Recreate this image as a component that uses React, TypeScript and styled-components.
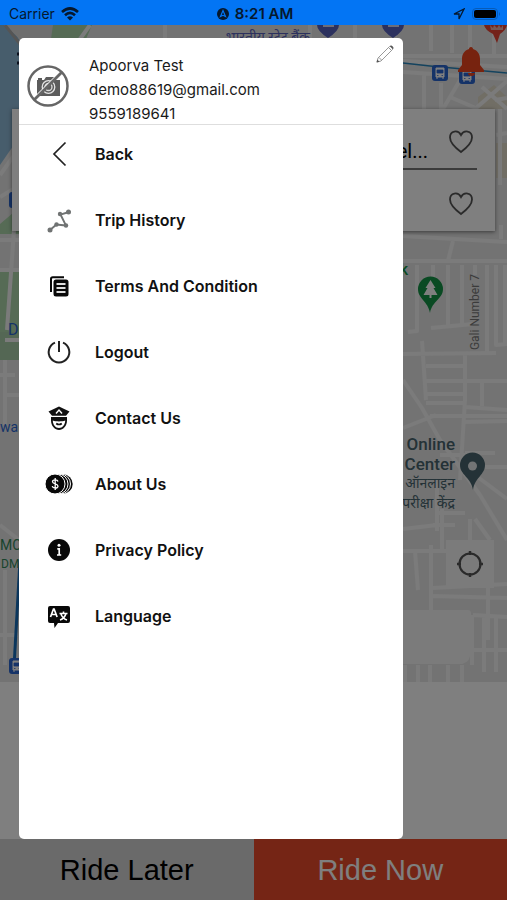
import React from "react";
import styled, { createGlobalStyle, css } from "styled-components";

const Global = createGlobalStyle`
  * { box-sizing: border-box; }
  body { margin: 0; font-family: Inter, "Noto Sans", sans-serif; color: #111; }
  button { font: inherit; color: inherit; border: 0; padding: 0; background: none; cursor: pointer; }
  svg { display: block; }
`;

const Page = styled.div`
  min-height: 100vh;
  display: flex;
  flex-direction: column;
  background: #fff;
`;

const StatusBar = styled.header`
  height: 25px;
  padding: 2px 6px 0 9px;
  display: grid;
  grid-template-columns: 1fr auto 1fr;
  align-items: center;
  background: #0375f4;
  color: #06182e;
  font-size: 14px;
  line-height: 20px;
`;

const StatusGroup = styled.div<{ $end?: boolean; $strong?: boolean }>`
  display: flex;
  align-items: center;
  gap: 6px;
  justify-content: ${(p) => (p.$end ? "flex-end" : "flex-start")};
  font-weight: ${(p) => (p.$strong ? 600 : 400)};
  font-size: ${(p) => (p.$strong ? 15 : 14)}px;
`;

const Stage = styled.div`
  position: relative;
  flex: 1;
  display: flex;
  flex-direction: column;
`;

const MapArea = styled.main`
  position: relative;
  flex: 1;
  overflow: hidden;
  margin-bottom: 157px;
  display: flex;
  flex-direction: column;
  background: #eaeaea;
`;

const MapCanvas = styled.svg`
  position: absolute;
  inset: 0;
  width: 100%;
  height: 100%;
`;

const MapLabel = styled.span<{ $x: number; $y: number; $color: string; $size?: number; $bold?: boolean; $fromRight?: boolean; $vertical?: boolean }>`
  position: absolute;
  top: ${(p) => p.$y}px;
  ${(p) => (p.$fromRight ? css`right: ${p.$x}px;` : css`left: ${p.$x}px;`)}
  color: ${(p) => p.$color};
  font-family: Roboto, "Noto Sans", sans-serif;
  font-size: ${(p) => p.$size ?? 16}px;
  line-height: 20px;
  font-weight: ${(p) => (p.$bold ? 500 : 400)};
  white-space: nowrap;
  text-align: right;
  ${(p) => p.$vertical && css`writing-mode: vertical-rl; rotate: 180deg;`}
`;

const MapTools = styled.div`
  position: relative;
  height: 84px;
  padding: 21px 22px 0 17px;
  display: flex;
  justify-content: space-between;
  align-items: flex-start;
`;

const PlaceCard = styled.section`
  position: relative;
  margin: 0 12px;
  height: 122px;
  padding: 0 18px;
  background: #fff;
  box-shadow: 0 1px 4px rgba(0, 0, 0, 0.5);
`;

const PlaceRow = styled.div<{ $line?: boolean }>`
  height: 61px;
  padding: 7px 3px 0 0;
  display: flex;
  align-items: center;
  justify-content: flex-end;
  gap: 20px;
  border-bottom: ${(p) => (p.$line ? "2px solid #777" : "0")};
  font-family: Roboto, sans-serif;
  font-size: 20px;
  color: #000;
`;

const PlaceText = styled.span`
  padding-top: 18px;
`;

const LocateButton = styled.button`
  position: absolute;
  right: 13px;
  bottom: 94px;
  width: 48px;
  height: 48px;
  display: grid;
  place-items: center;
  background: #f7f7f7;
`;

const Footer = styled.footer`
  display: grid;
  grid-template-columns: 1fr 1fr;
  height: 61px;
`;

const RideButton = styled.button<{ $primary?: boolean }>`
  && {
    padding-top: 2px;
    font-family: "Liberation Sans", Arial, sans-serif;
    font-size: 29px;
    background: ${(p) => (p.$primary ? "#ea4b2a" : "#d4d4d4")};
    color: ${(p) => (p.$primary ? "#fff" : "#000")};
  }
`;

const Scrim = styled.div`
  position: absolute;
  inset: 0;
  display: flex;
  padding: 13px 0 61px 19px;
  background: rgba(0, 0, 0, 0.5);
`;

const Drawer = styled.aside`
  width: 79%;
  max-width: 384px;
  background: #fff;
  border-radius: 5px;
`;

const Profile = styled.div`
  height: 87px;
  padding: 6px 8px 0;
  display: grid;
  grid-template-columns: 42px 1fr 20px;
  column-gap: 20px;
  align-items: start;
  border-bottom: 1px solid #dedede;
`;

const Avatar = styled.div`
  padding-top: 21px;
`;

const ProfileText = styled.div`
  padding-top: 10px;
  font-size: 15px;
  line-height: 24px;
  color: #1a1a1a;
`;

const ProfileLine = styled.div``;

const Menu = styled.nav`
  padding-top: 11px;
`;

const MenuItem = styled.button`
  width: 100%;
  height: 36px;
  margin-bottom: 30px;
  padding-left: 25px;
  display: grid;
  grid-template-columns: 30px 1fr;
  column-gap: 21px;
  align-items: center;
  text-align: left;
`;

const MenuLabel = styled.span`
  font-size: 16px;
  line-height: 24px;
  font-weight: 600;
`;

const Icon = ({ children, w = 30, h = w }: { children: React.ReactNode; w?: number; h?: number }) => (
  <svg width={w} height={h} viewBox={`0 0 ${w} ${h}`} fill="none" aria-hidden="true">{children}</svg>
);

const BackIcon = () => <Icon><path d="M21.500 3.500 10 15 21.500 26.500" stroke="#222" strokeWidth="1.700" /></Icon>;

const TripIcon = () => (
  <Icon>
    <path d="M6 25 12.500 19.500 22 20.500 16.500 9.500 25 7" stroke="#707373" strokeWidth="1.900" />
    <g fill="#707373"><circle cx="6" cy="25" r="2.500" /><circle cx="12.500" cy="19.500" r="2.200" /><circle cx="22" cy="20.500" r="2.200" /><circle cx="16" cy="9" r="2.200" /><circle cx="24.500" cy="7" r="2.500" /></g>
  </Icon>
);

const TermsIcon = () => (
  <Icon>
    <path d="M7 21V8q0-1.800 1.800-1.800H20" stroke="#080808" strokeWidth="2" />
    <rect x="9.500" y="8.500" width="15" height="17" rx="2.500" fill="#080808" />
    <path d="M12.500 13h9M12.500 17h9M12.500 21h9" stroke="#ddd" strokeWidth="1.900" />
  </Icon>
);

const PowerIcon = () => (
  <Icon><path d="M11 5.600a10.300 10.300 0 1 0 8 0M15 4v11" stroke="#222" strokeWidth="2" /></Icon>
);

const OfficerIcon = () => (
  <Icon>
    <path d="M4.500 8.500 15 3.500l10.500 5-3.500 4.200H8z" fill="#111" />
    <path d="m12 10.500 3-3.500 3 3.500" stroke="#fff" strokeWidth="1.400" />
    <path d="M7 14h16v3.500c0 5.500-4 9.500-8 9.500s-8-4-8-9.500z" fill="#111" />
    <path d="M8.800 17.500c3 1.200 9.400 1.200 12.400 0 0 4-2.700 7.500-6.200 7.500s-6.200-3.500-6.200-7.500z" fill="#fff" />
    <path d="M12.200 20.500q2.800 2 5.600 0" stroke="#111" strokeWidth="1.700" />
  </Icon>
);

const CoinsIcon = () => (
  <Icon>
    <circle cx="19" cy="15" r="9.700" fill="#080808" />
    <circle cx="16.500" cy="15" r="10" fill="#080808" stroke="#fff" />
    <circle cx="14" cy="15" r="10" fill="#080808" stroke="#fff" />
    <circle cx="11" cy="15" r="10" fill="#080808" stroke="#fff" />
    <path d="M14 12.500c-.5-2-5.500-2.300-5.500.3 0 2.700 5.500 1.600 5.500 4.400 0 2.500-5.200 2.400-5.800 0M11.200 9v12" stroke="#fff" strokeWidth="1.300" />
  </Icon>
);

const InfoIcon = () => (
  <Icon>
    <circle cx="15" cy="15" r="11" fill="#080808" />
    <circle cx="15" cy="10.300" r="1.500" fill="#fff" />
    <path d="M13.300 13.800H15.200v6M13 20h4.200" stroke="#fff" strokeWidth="1.700" />
  </Icon>
);

const LanguageIcon = () => (
  <Icon>
    <path d="M6 5h18q2 0 2 2v13q0 2-2 2H14l-3.500 5L10 22H6q-2 0-2-2V7q0-2 2-2z" fill="#080808" />
    <path d="m6.500 16 3-8h.6l3 8M7.500 13.500h5" stroke="#fff" strokeWidth="1.700" />
    <path d="M15.500 12.500h8M19.500 10.500v2M22 12.500c-1 3.500-3 5.500-6 6.500M17 13c1 3 3 5 6 6" stroke="#fff" strokeWidth="1.600" />
  </Icon>
);

const items = [
  { label: "Back", icon: <BackIcon /> },
  { label: "Trip History", icon: <TripIcon /> },
  { label: "Terms And Condition", icon: <TermsIcon /> },
  { label: "Logout", icon: <PowerIcon /> },
  { label: "Contact Us", icon: <OfficerIcon /> },
  { label: "About Us", icon: <CoinsIcon /> },
  { label: "Privacy Policy", icon: <InfoIcon /> },
  { label: "Language", icon: <LanguageIcon /> },
];

const NoPhotoIcon = () => (
  <Icon w={42}>
    <path d="M10 15h1v-2h4v2h2l2-3h8l2 3h4v16H10z" fill="#5c5c5c" />
    <circle cx="21.500" cy="22" r="6.300" stroke="#e4e4e4" strokeWidth="1.300" />
    <circle cx="21.500" cy="22" r="3.500" stroke="#ddd" strokeWidth="1.300" />
    <path d="m9 31 24-24" stroke="#fff" strokeWidth="1.500" />
    <path d="m7 35 28-28" stroke="#666" strokeWidth="2.800" />
    <circle cx="21" cy="21" r="19.500" stroke="#666" strokeWidth="2.500" />
  </Icon>
);

const PencilIcon = () => (
  <Icon w={20}>
    <path d="m2 18 1-4L14.500 2.500q1.500-1.500 3 0t0 3L6 17zM4 13.500 6.500 16M13.500 3.500l3 3" stroke="#999" />
    <path d="m1.500 18.500.8-3 2.200 2.200zM14.800 2.200q1.500-1 2.700.3t.3 2.700z" fill="#555" />
  </Icon>
);

const HeartIcon = () => (
  <Icon w={26}>
    <path d="M13 23C9 20 2 14.500 2 8.500 2 1.500 10 .5 13 6c3-5.500 11-4.500 11 2.500C24 14.500 17 20 13 23z" stroke="#555" strokeWidth="1.800" />
  </Icon>
);

const BellIcon = () => (
  <Icon w={28} h={30}>
    <path d="M14 1c1.500 0 2 1 2 2 5 1.500 7 5.500 7 10v6l4 5v2H1v-2l4-5v-6c0-4.500 2-8.500 7-10 0-1 .5-2 2-2z" fill="#ef461f" />
    <path d="M11 27h7q0 3-3.500 3T11 27z" fill="#ef461f" />
  </Icon>
);

const BusBadge = ({ x, y }: { x: number; y: number }) => (
  <g transform={`translate(${x} ${y})`}>
    <rect width="16" height="16" rx="3" fill="#2b66d0" />
    <path d="M4 3h8v9H4zM5 12v2M11 12v2" fill="#fff" stroke="#fff" />
    <path d="M5 5h6v3H5zM5 10.500h1.500M9.500 10.500H11" fill="#2b66d0" stroke="#2b66d0" strokeWidth=".8" />
  </g>
);

const roads = [
  "M403 31H507M403 36 507 42M431 0V26M452 0V28M470 0V26M494 0V29",
  "M403 47 507 54M424 47V84M441 58V84M463 50 443 84M475 84 507 56M482 62 507 84M450 72 478 84",
  "M495 75 507 73M496 110 507 108M500 84V160",
  "M403 211 507 217M453 216 448 236M403 236H507M501 200V214",
  "M417 240V306L408 307M433 240V252M448 240V302M462 240V300M475 240V250M487 240V328M496 240V320L507 319M505 240V318M431 303 473 299",
  "M403 329 496 328M422 316 426 375M426 341H465M426 356H507M426 369H465M426 378H465M430 391H507M465 328V375L460 455",
  "M482 356V381M465 382 507 385M464 397 507 396M465 428H495M465 442H507",
  "M403 355 422 383 440 415 480 470 507 515",
  "M403 403 436 390M440 430H470M475 450 507 474M403 504 437 500M437 455V506M437 488H465M442 484V526M403 526H450M415 526 418 565M433 500H455M470 494V515M475 494 490 515",
  "M433 563 507 559M433 571 507 573M431 520V585M470 550V559M488 560V615M473 590 507 592M473 625H507M472 590V640M484 590V647M496 590V647M405 640V657M418 640V657M430 640V657M448 640V657M462 640V657",
  "M90 0 80 14M165 0V14M310 0V14M355 0V14M395 0V14",
  "M0 150 20 122M0 215H20M0 245H20M14 205 7 305M0 172 20 160M5 335V400M5 370H20M5 315H20M0 350H15",
  "M0 500 19 515M5 545V640M0 610H18",
];

const CityMap = () => (
  <MapCanvas viewBox="0 0 507 657" preserveAspectRatio="xMaxYMin slice" aria-hidden="true">
    <path d="M0 0h507v657H0z" fill="#e7e7e7" />
    <path d="M0 0h10l10 16v95L0 140z" fill="#8fbad8" />
    <path d="M4 0h85L76 14H20z" fill="#dcdcdc" />
    <path d="M53 0h39l-6 14H51zM0 199l20-17v27H0zM0 245h20v62H0z" fill="#acd6ab" />
    <path d="M0 307h20v28H0z" fill="#a9cfa8" />
    <path d="M478 72 494 60 507 72v12h-29zM496 118h11v35h-11z" fill="#e2dccb" />
    <g stroke="#f6f6f6" strokeWidth="4" fill="none" strokeLinejoin="round">{roads.map((d) => <path key={d} d={d} />)}</g>
    <path d="M5 0 20 19" stroke="#aaa" strokeWidth="3" />
    <path d="M403 38 430 41 507 48" fill="none" stroke="#2986bd" strokeWidth="1.500" />
    <path d="M20 535 14 642" stroke="#176cb8" strokeWidth="3" />
    <path d="M403 585h65q3 0 3 4v36q0 12-9 14h-59z" fill="#f7f7f7" />
    <BusBadge x={432} y={40} /><BusBadge x={459} y={43} />
    <BusBadge x={9} y={633} /><BusBadge x={9} y={167} />
    <g fill="#5963bd"><path d="M317 0h22q0 6-11 13Q317 6 317 0zM382 0h22q0 6-11 13Q382 6 382 0z" /></g>
    <path d="M323 0h11v2h-11zM388 0h11v2h-11z" fill="#d8daf0" />
    <path d="M484 0h23q-1 5-7 9l-3 9-4-9q-8-4-9-9z" fill="#e94435" />
    <path d="m490 0 3 3 1-3 3 3 2-3 2 3 2-3v5h-12z" fill="#f0b0a8" />
    <path d="M430 288c-2-12-12-14-12-24a12.500 12.500 0 0 1 25 0c0 10-11 12-13 24z" fill="#159447" />
    <path d="m430.500 255-5 8h2l-4 7h6v3h2v-3h6l-4-7h2z" fill="#fff" />
    <path d="M473 465c-2-13-13-15-13-25a12.500 12.500 0 0 1 25 0c0 10-10 12-12 25z" fill="#49656e" />
    <circle cx="472.500" cy="441" r="4.500" fill="#e5e9ea" />
  </MapCanvas>
);

export default function App() {
  return (
    <Page>
      <Global />
      <StatusBar>
        <StatusGroup>
          Carrier
          <Icon w={18} h={14}><path d="M1 5q8-7 16 0M4 8.200q5-4.500 10 0" stroke="#06182e" strokeWidth="2.700" /><path d="M6 10.500q3-2.500 6 0l-3 3z" fill="#06182e" /></Icon>
        </StatusGroup>
        <StatusGroup $strong>
          <Icon w={12}><circle cx="6" cy="6" r="6" fill="#06182e" /><path d="m3.500 8.500 2.500-6 2.500 6L6 7.300z" stroke="#0375f4" strokeWidth="1.200" /></Icon>
          8:21 AM
        </StatusGroup>
        <StatusGroup $end>
          <Icon w={12}><path d="M1 6 11 1 6 11V6z" stroke="#06182e" strokeWidth="1.300" /></Icon>
          <Icon w={30} h={14}><rect x="1.500" y="1.500" width="25" height="11" rx="3.500" stroke="#075bb8" /><rect x="3" y="3" width="22" height="8" rx="2" fill="#000" /><path d="M28 5q2 2 0 4z" fill="#075bb8" /></Icon>
        </StatusGroup>
      </StatusBar>
      <Stage>
        <MapArea>
          <CityMap />
          <MapLabel $x={197} $y={2} $fromRight $size={14} $color="#5963bd">भारतीय स्टेट बैंक</MapLabel>
          <MapLabel $x={99} $y={235} $fromRight $color="#159447" $bold>Park</MapLabel>
          <MapLabel $x={22} $y={249} $fromRight $vertical $size={12} $color="#777">Gali Number 7</MapLabel>
          <MapLabel $x={52} $y={409} $fromRight $size={17} $bold $color="#49656e">Online<br />Center</MapLabel>
          <MapLabel $x={52} $y={448} $fromRight $size={14} $color="#49656e">ऑनलाइन<br />परीक्षा केंद्र</MapLabel>
          <MapLabel $x={8} $y={295} $color="#2b66d0">D</MapLabel>
          <MapLabel $x={0} $y={392} $size={14} $color="#2b66d0">war</MapLabel>
          <MapLabel $x={0} $y={510} $size={14} $color="#31875a">MC</MapLabel>
          <MapLabel $x={1} $y={529} $size={12} $color="#31875a">DM</MapLabel>
          <MapTools>
            <button aria-label="Open menu"><Icon w={24}><path d="M0 8h24M0 17h24M0 26h24" stroke="#16203a" strokeWidth="3" /></Icon></button>
            <button aria-label="Notifications"><BellIcon /></button>
          </MapTools>
          <PlaceCard>
            <PlaceRow $line><PlaceText>el...</PlaceText><button aria-label="Save pickup"><HeartIcon /></button></PlaceRow>
            <PlaceRow><button aria-label="Save destination"><HeartIcon /></button></PlaceRow>
          </PlaceCard>
          <LocateButton aria-label="Show my location">
            <Icon w={28}><circle cx="14" cy="14" r="10.500" stroke="#555" strokeWidth="2.200" /><path d="M14 1v4M14 23v4M1 14h4M23 14h4" stroke="#555" strokeWidth="2.500" /></Icon>
          </LocateButton>
        </MapArea>
        <Footer>
          <RideButton>Ride Later</RideButton>
          <RideButton $primary>Ride Now</RideButton>
        </Footer>
        <Scrim>
          <Drawer>
            <Profile>
              <Avatar><NoPhotoIcon /></Avatar>
              <ProfileText>
                <ProfileLine>Apoorva Test</ProfileLine>
                <ProfileLine>demo88619@gmail.com</ProfileLine>
                <ProfileLine>9559189641</ProfileLine>
              </ProfileText>
              <button aria-label="Edit profile"><PencilIcon /></button>
            </Profile>
            <Menu>
              {items.map((item) => (
                <MenuItem key={item.label}>{item.icon}<MenuLabel>{item.label}</MenuLabel></MenuItem>
              ))}
            </Menu>
          </Drawer>
        </Scrim>
      </Stage>
    </Page>
  );
}
